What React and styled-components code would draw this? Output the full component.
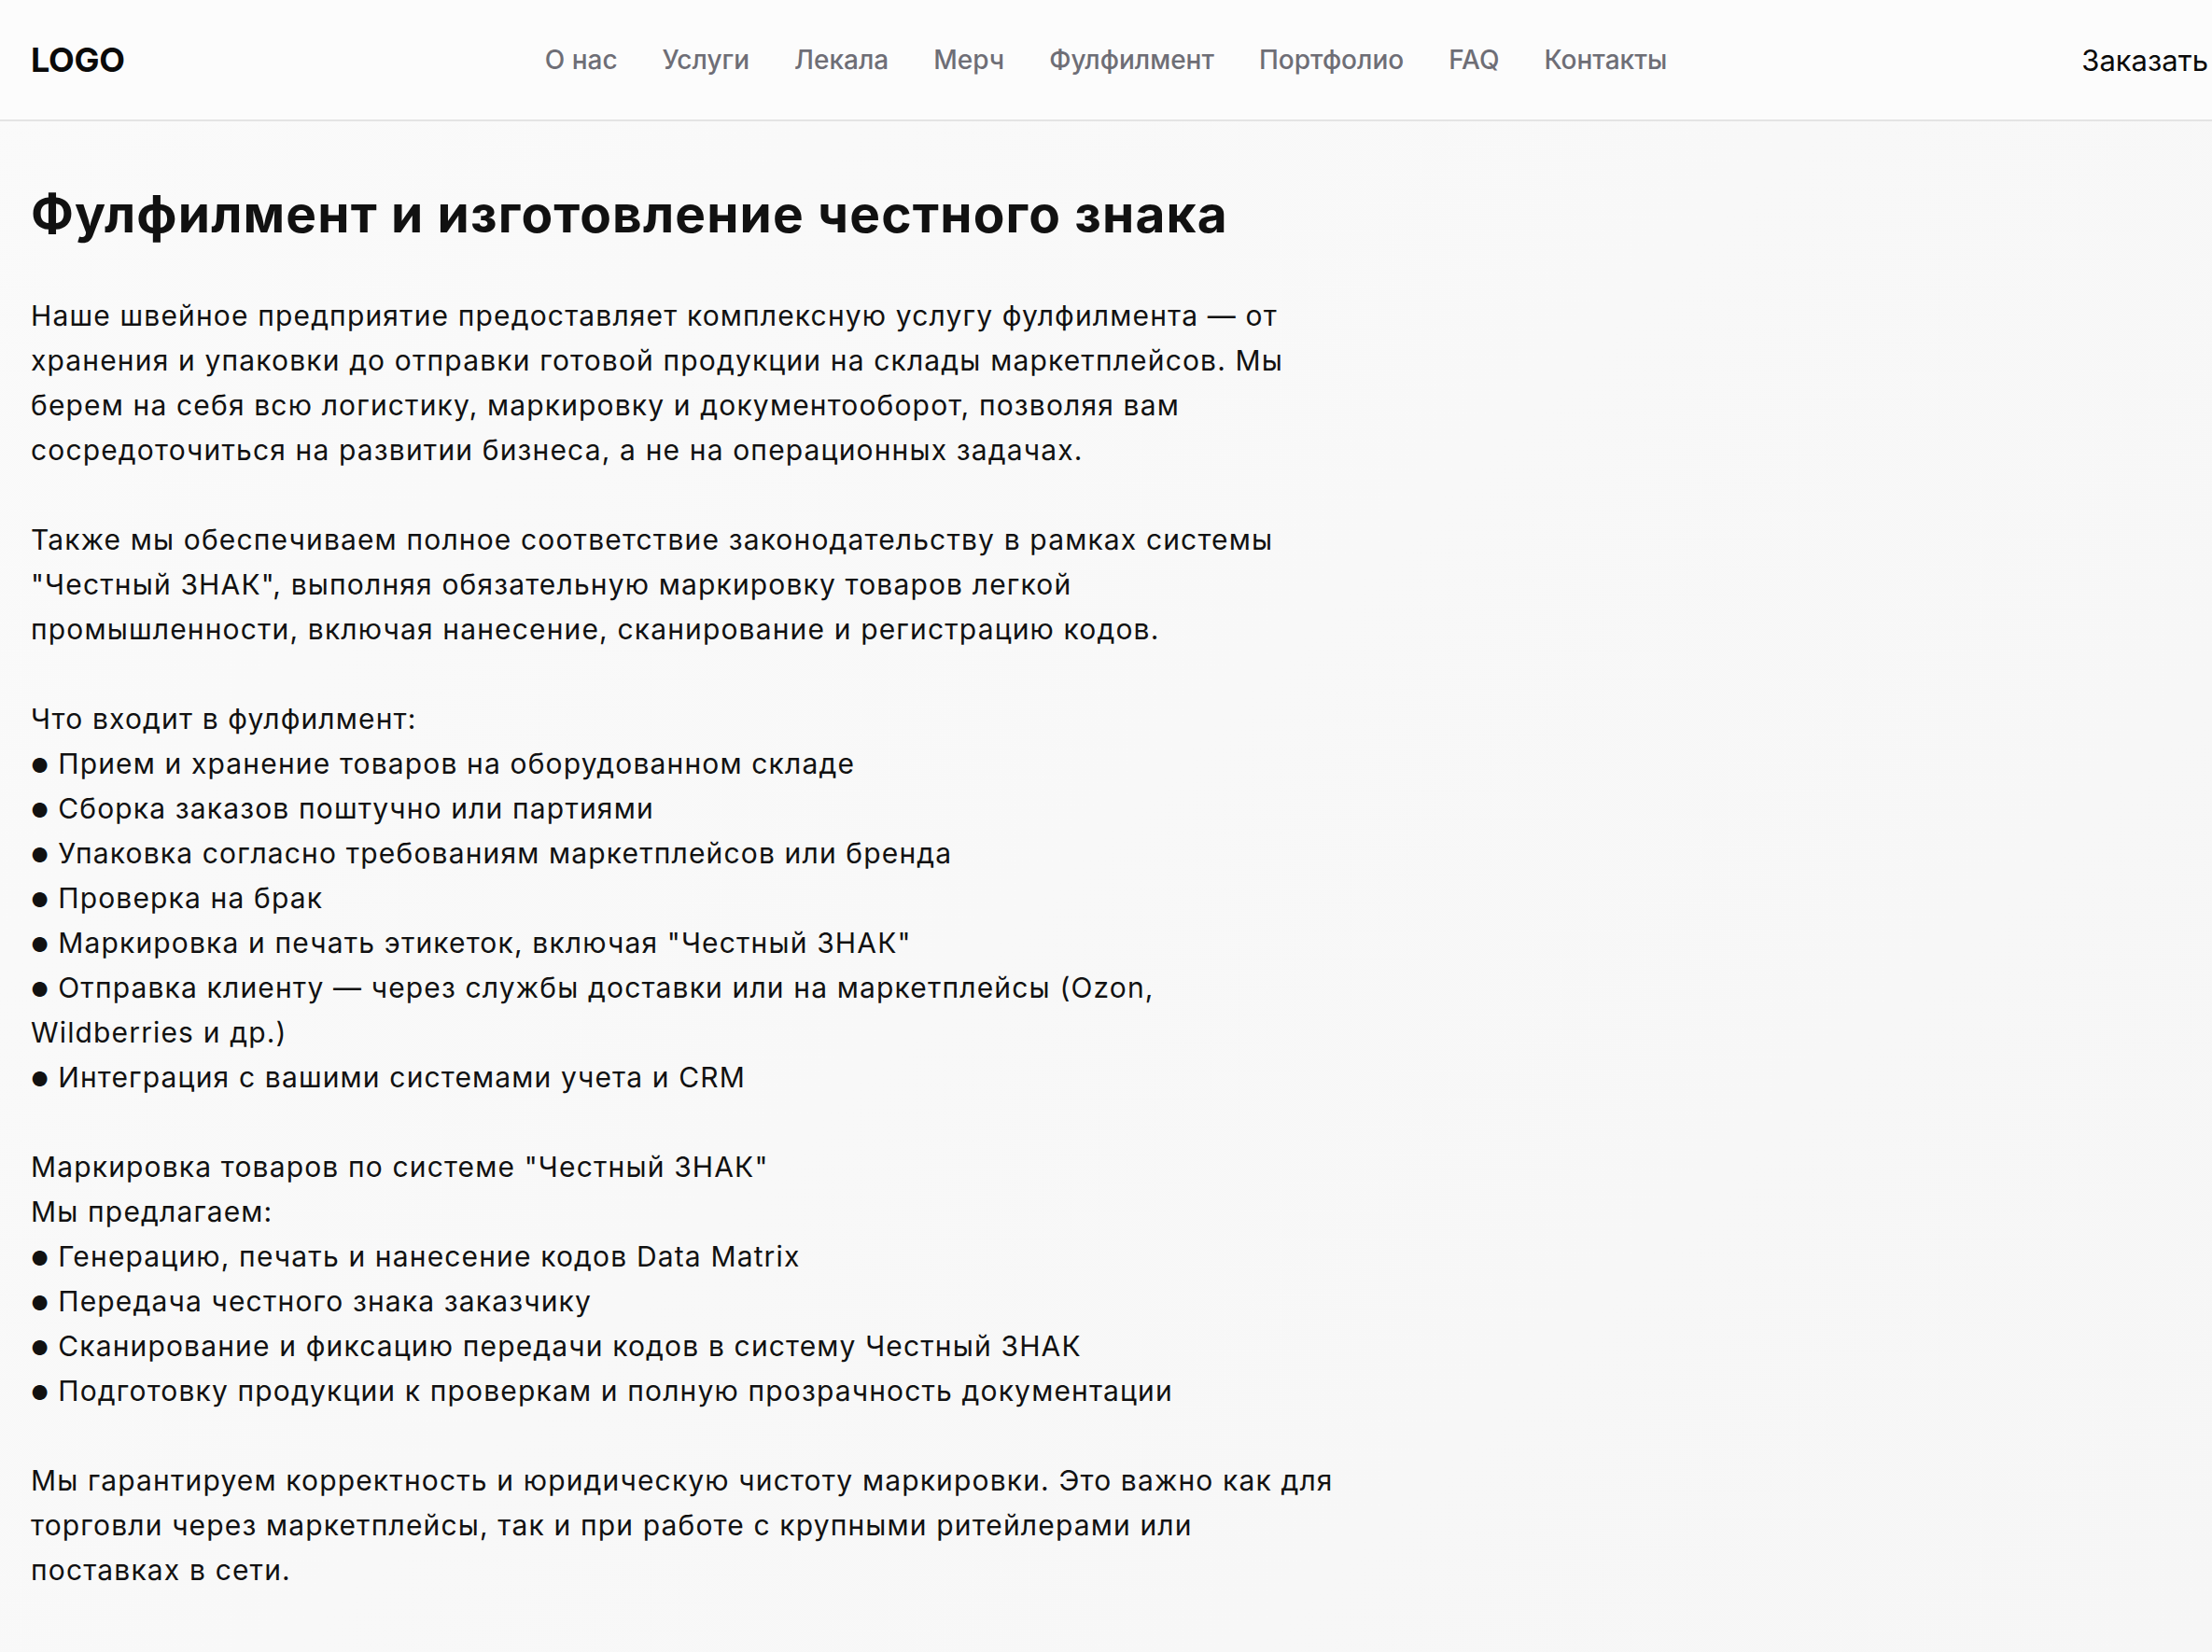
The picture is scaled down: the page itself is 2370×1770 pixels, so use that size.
import styled, {createGlobalStyle} from "styled-components";

const GlobalStyle = createGlobalStyle`
  html, body {
    margin: 0;
    padding: 0;
  }
  body {
    font-family: Inter, "Noto Sans", "Liberation Sans", sans-serif;
    background: linear-gradient(135deg, #fafafa 0%, #f6f6f6 100%);
    color: #111111;
    min-height: 1770px;
  }
`;

const Header = styled.header`
  height: 128px;
  display: grid;
  grid-template-columns: 1fr auto 1fr;
  align-items: center;
  padding: 0 4px;
  background: #fcfcfc;
  border-bottom: 2px solid #e4e4e4;
`;

const Logo = styled.div`
  margin-left: 29px;
  font-size: 36px;
  font-weight: 700;
  letter-spacing: -0.3px;
  color: #0a0a0a;
`;

const Nav = styled.nav`
  display: flex;
  gap: 48px;
`;

const NavLink = styled.a`
  font-size: 28px;
  font-weight: 500;
  color: #6e6e76;
  text-decoration: none;
  cursor: pointer;
`;

const OrderButton = styled.a`
  justify-self: end;
  font-size: 31px;
  color: #0a0a0a;
  cursor: pointer;
`;

const Main = styled.main`
  padding: 66px 33px 60px;
  max-width: 1400px;
`;

const Title = styled.h1`
  margin: 0 0 52px;
  font-size: 55px;
  font-weight: 700;
  letter-spacing: 1.15px;
  line-height: 1.2;
`;

const Text = styled.div`
  font-size: 30px;
  line-height: 48px;
  letter-spacing: 1.15px;
`;

const Paragraph = styled.p`
  margin: 0 0 48px;
  &:last-child {
    margin-bottom: 0;
  }
`;

const Line = styled.div`
  white-space: pre-line;
`;

const Bullet = styled.span`
  margin-right: 10px;
  font-size: 21px;
  line-height: 0;
  letter-spacing: 0;
  position: relative;
  top: -1px;
`;

const navItems = ["О нас", "Услуги", "Лекала", "Мерч", "Фулфилмент", "Портфолио", "FAQ", "Контакты"];

const intro = [
  "Наше швейное предприятие предоставляет комплексную услугу фулфилмента — от хранения и упаковки до отправки готовой продукции на склады маркетплейсов. Мы берем на себя всю логистику, маркировку и документооборот, позволяя вам сосредоточиться на развитии бизнеса, а не на операционных задачах.",
  "Также мы обеспечиваем полное соответствие законодательству в рамках системы \"Честный ЗНАК\", выполняя обязательную маркировку товаров легкой промышленности, включая нанесение, сканирование и регистрацию кодов.",
];

const lists = [
  {
    heading: ["Что входит в фулфилмент:"],
    items: [
      "Прием и хранение товаров на оборудованном складе",
      "Сборка заказов поштучно или партиями",
      "Упаковка согласно требованиям маркетплейсов или бренда",
      "Проверка на брак",
      "Маркировка и печать этикеток, включая \"Честный ЗНАК\"",
      "Отправка клиенту — через службы доставки или на маркетплейсы (Ozon,\nWildberries и др.)",
      "Интеграция с вашими системами учета и CRM",
    ],
  },
  {
    heading: ["Маркировка товаров по системе \"Честный ЗНАК\"", "Мы предлагаем:"],
    items: [
      "Генерацию, печать и нанесение кодов Data Matrix",
      "Передача честного знака заказчику",
      "Сканирование и фиксацию передачи кодов в систему Честный ЗНАК",
      "Подготовку продукции к проверкам и полную прозрачность документации",
    ],
  },
];

const outro =
  "Мы гарантируем корректность и юридическую чистоту маркировки. Это важно как для торговли через маркетплейсы, так и при работе с крупными ритейлерами или поставках в сети.";

export default function App() {
  return (
    <>
      <GlobalStyle />
      <Header>
        <Logo>LOGO</Logo>
        <Nav>
          {navItems.map((item) => (
            <NavLink key={item}>{item}</NavLink>
          ))}
        </Nav>
        <OrderButton>Заказать</OrderButton>
      </Header>
      <Main>
        <Title>Фулфилмент и изготовление честного знака</Title>
        <Text>
          {intro.map((p, i) => (
            <Paragraph key={i}>{p}</Paragraph>
          ))}
          {lists.map((list, i) => (
            <Paragraph as="div" key={i}>
              {list.heading.map((h) => (
                <Line key={h}>{h}</Line>
              ))}
              {list.items.map((item) => (
                <Line key={item}>
                  <Bullet>●</Bullet>
                  {item}
                </Line>
              ))}
            </Paragraph>
          ))}
          <Paragraph>{outro}</Paragraph>
        </Text>
      </Main>
    </>
  );
}
